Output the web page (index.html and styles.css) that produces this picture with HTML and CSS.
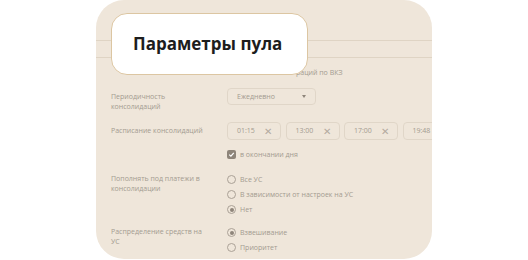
FILE: index.html
```html
<!DOCTYPE html>
<html lang="ru">
<head>
  <meta charset="UTF-8">
  <title>Параметры пула</title>
  <link rel="stylesheet" href="styles.css">
</head>
<body>
  <div class="card">
    <div class="tabs">
      <div class="rule"></div>
      <div class="rule"></div>
    </div>
    <div class="note">раций по ВКЗ</div>

    <div class="title-box">Параметры пула</div>

    <div class="row row-period">
      <div class="label">Периодичность<br>консолидаций</div>
      <div class="select">
        <span>Ежедневно</span>
        <span class="arrow"></span>
      </div>
    </div>

    <div class="row row-schedule">
      <div class="label">Расписание консолидаций</div>
      <div class="chips">
        <div class="chip"><span>01:15</span><span class="x">✕</span></div>
        <div class="chip"><span>13:00</span><span class="x">✕</span></div>
        <div class="chip"><span>17:00</span><span class="x">✕</span></div>
        <div class="chip"><span>19:48</span></div>
      </div>
    </div>

    <div class="row row-check">
      <div class="label"></div>
      <label class="check"><span class="box">
        <svg width="7" height="7" viewBox="0 0 7 7"><path d="M1.2 3.6 L2.9 5.2 L5.8 1.8" fill="none" stroke="#fff" stroke-width="1.2"/></svg>
      </span>в окончании дня</label>
    </div>

    <div class="row row-topup">
      <div class="label">Пополнять под платежи в<br>консолидации</div>
      <div class="radios">
        <div class="radio"><span class="dot"></span>Все УС</div>
        <div class="radio"><span class="dot"></span>В зависимости от настроек на УС</div>
        <div class="radio on"><span class="dot"></span>Нет</div>
      </div>
    </div>

    <div class="row row-dist">
      <div class="label">Распределение средств на<br>УС</div>
      <div class="radios">
        <div class="radio on"><span class="dot"></span>Взвешивание</div>
        <div class="radio"><span class="dot"></span>Приоритет</div>
      </div>
    </div>
  </div>
</body>
</html>
```

FILE: styles.css
```css
body {
  margin: 0;
  background: #fff;
  font-family: "Open Sans", "Noto Sans", sans-serif;
}
.card {
  position: relative;
  margin-left: 96px;
  width: 336px;
  height: 259px;
  background: #efe6da;
  border-radius: 28px;
  overflow: hidden;
  padding-left: 15px;
  box-sizing: border-box;
  font-size: 7px;
  line-height: 10px;
  color: #a39b90;
}
.title-box {
  position: absolute;
  left: 15px;
  top: 13px;
  width: 197px;
  height: 62px;
  box-sizing: border-box;
  background: #fff;
  border: 1.5px solid #dcc6a2;
  border-radius: 16px;
  padding-left: 21px;
  display: flex;
  align-items: center;
  font-size: 17px;
  font-weight: bold;
  color: #1d1d1d;
}
.tabs {
  padding-top: 40px;
  margin-left: -15px;
  display: flex;
  flex-direction: column;
  gap: 16px;
}
.rule {
  height: 1px;
  background: #dfd4c4;
}
.note {
  margin-top: 10px;
  padding-left: 185px;
  height: 10px;
}
.row {
  display: flex;
}
.label {
  width: 116px;
  flex-shrink: 0;
}
.row-period {
  margin-top: 10px;
}
.row-period .label,
.row-schedule .label {
  padding-top: 4px;
}
.select {
  width: 89px;
  height: 17px;
  box-sizing: border-box;
  border: 1px solid #e0d6c8;
  border-radius: 4px;
  padding: 0 9px;
  display: flex;
  align-items: center;
  justify-content: space-between;
}
.arrow {
  width: 0;
  height: 0;
  border-left: 2px solid transparent;
  border-right: 2px solid transparent;
  border-top: 3px solid #8e857a;
}
.row-schedule {
  margin-top: 10px;
}
.chips {
  display: flex;
  gap: 4.5px;
}
.chip {
  width: 54px;
  height: 18px;
  flex-shrink: 0;
  box-sizing: border-box;
  border: 1px solid #e0d6c8;
  border-radius: 4px;
  padding: 0 8px 0 9px;
  display: flex;
  align-items: center;
  justify-content: space-between;
}
.chip .x {
  font-size: 10px;
  font-weight: 300;
  color: #b3aa9f;
}
.row-check {
  margin-top: 10px;
  height: 9px;
}
.check {
  display: flex;
  align-items: center;
  gap: 4px;
}
.box {
  width: 9px;
  height: 9px;
  border-radius: 2px;
  background: #8e857a;
  display: flex;
  align-items: center;
  justify-content: center;
}
.row-topup {
  margin-top: 13px;
}
.row-topup .label,
.row-dist .label {
  padding-top: 2px;
}
.row-dist {
  margin-top: 8px;
}
.radio {
  height: 15px;
  display: flex;
  align-items: center;
  gap: 4px;
}
.dot {
  width: 9px;
  height: 9px;
  box-sizing: border-box;
  border: 1px solid #aaa196;
  border-radius: 50%;
  display: flex;
  align-items: center;
  justify-content: center;
}
.radio.on .dot::after {
  content: "";
  width: 4px;
  height: 4px;
  border-radius: 50%;
  background: #8e857a;
}
```
